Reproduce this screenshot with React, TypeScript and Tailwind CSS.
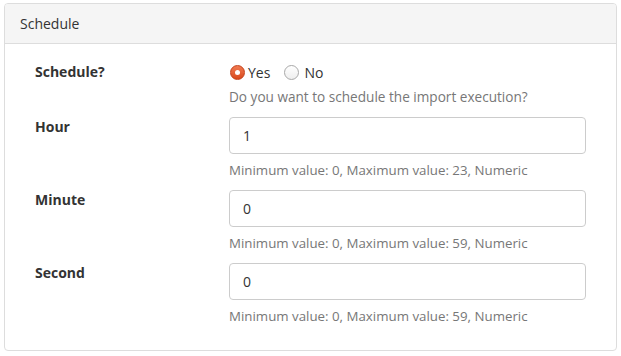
const font = { fontFamily: '"Open Sans", "Noto Sans", sans-serif' }

function Radio({ checked }: { checked?: boolean }) {
  if (checked) {
    return (
      <span className="block shrink-0 w-[15px] h-[15px] rounded-full bg-gradient-to-b from-[#f07a50] to-[#d9481a] border border-[#c4401a] flex items-center justify-center">
        <span className="block w-[5px] h-[5px] rounded-full bg-white" />
      </span>
    )
  }
  return <span className="block shrink-0 w-[15px] h-[15px] rounded-full bg-gradient-to-b from-white to-[#eeeeee] border border-[#a8a8a8]" />
}

function NumberRow({ label, value, help }: { label: string; value: string; help: string }) {
  return (
    <div className="flex mt-[10px]">
      <div className="w-[194px] text-[14px] leading-[20px] font-bold text-[#333]">{label}</div>
      <div className="flex-1">
        <div className="h-[37px] border border-[#ccc] rounded-[4px] bg-white flex items-center pl-[13px] text-[14px] text-[#333]">
          {value}
        </div>
        <div className="mt-[6px] h-[20px] leading-[20px] text-[13.3px] text-[#777]">{help}</div>
      </div>
    </div>
  )
}

export default function App() {
  return (
    <div className="w-[621px] h-[356px] bg-white pt-[3px] pl-[4px]" style={font}>
      <div className="w-[613px] h-[348px] border border-[#ddd] rounded-[4px] overflow-hidden">
        <div className="h-[40px] bg-[#f5f5f5] border-b border-[#ddd] px-[15px] flex items-center text-[14px] text-[#333]">
          Schedule
        </div>
        <div className="px-[30px] pt-[18px]">
          <div className="flex">
            <div className="w-[194px] text-[14px] leading-[20px] font-bold text-[#333]">Schedule?</div>
            <div className="flex-1">
              <div className="flex items-center h-[20px] text-[14px] text-[#333] pl-[1px]">
                <Radio checked />
                <span className="ml-[3px]">Yes</span>
                <span className="ml-[14px] flex">
                  <Radio />
                </span>
                <span className="ml-[5px]">No</span>
              </div>
              <div className="mt-[5px] h-[20px] leading-[20px] text-[13.6px] text-[#777]">
                Do you want to schedule the import execution?
              </div>
            </div>
          </div>
          <NumberRow label="Hour" value="1" help="Minimum value: 0, Maximum value: 23, Numeric" />
          <NumberRow label="Minute" value="0" help="Minimum value: 0, Maximum value: 59, Numeric" />
          <NumberRow label="Second" value="0" help="Minimum value: 0, Maximum value: 59, Numeric" />
        </div>
      </div>
    </div>
  )
}
